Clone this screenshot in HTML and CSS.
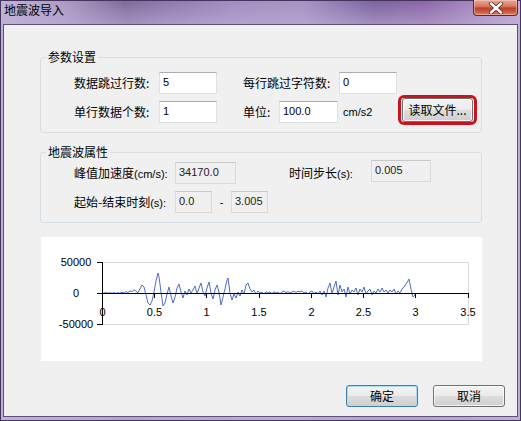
FILE: index.html
```html
<!DOCTYPE html>
<html lang="zh-CN">
<head>
<meta charset="utf-8">
<title>地震波导入</title>
<link rel="stylesheet" href="styles.css">
</head>
<body>
<div class="window">
  <div class="titlebar">
    <span class="title">地震波导入</span>
    <div class="close">
      <svg width="20" height="12" viewBox="0 0 20 12">
        <path d="M5 1.5 L15 10.5 M15 1.5 L5 10.5" stroke="#5a2a22" stroke-width="4" stroke-linecap="round"/>
        <path d="M5 1.5 L15 10.5 M15 1.5 L5 10.5" stroke="#ffffff" stroke-width="2.4" stroke-linecap="round"/>
      </svg>
    </div>
  </div>
  <div class="client">
    <fieldset class="group g1">
      <legend>参数设置</legend>
      <div class="rows">
        <div class="row">
          <span class="lbl w85">数据跳过行数:</span>
          <div class="edit w58">5</div>
          <span class="lbl w96 ml26">每行跳过字符数:</span>
          <div class="edit w58">0</div>
        </div>
        <div class="row r2">
          <span class="lbl w85">单行数据个数:</span>
          <div class="edit w58">1</div>
          <span class="lbl w36 ml26">单位:</span>
          <div class="edit w59">100.0</div>
          <span class="unit">cm/s2</span>
          <div class="highlight"><div class="btn read">读取文件...</div></div>
        </div>
      </div>
    </fieldset>
    <fieldset class="group g2">
      <legend>地震波属性</legend>
      <div class="rows">
        <div class="row">
          <span class="lbl w101">峰值加速度<span class="lat">(cm/s):</span></span>
          <div class="ro w61">34170.0</div>
          <span class="lbl w82 ml53">时间步长<span class="lat">(s):</span></span>
          <div class="ro w60 up">0.005</div>
        </div>
        <div class="row r2b">
          <span class="lbl w101">起始-结束时刻<span class="lat">(s):</span></span>
          <div class="ro w37">0.0</div>
          <span class="dash">-</span>
          <div class="ro w37">3.005</div>
        </div>
      </div>
    </fieldset>
    <div class="chart">
      <svg width="441" height="124" viewBox="0 0 441 124">
        <g stroke="#d9d9d9" stroke-width="1" fill="none">
          <path d="M61 25.5 H427.5 V87.5 H61"/>
        </g>
        <polyline fill="none" stroke="#4f6ec3" stroke-width="1" stroke-linejoin="round" points="61,56 63,56 65,55.5 67,56.3 69,55.8 71,56.2 73,55.6 75,56.4 77,55.7 79,56.3 81,55.2 83,56 85,54.6 87,55.5 89,53.8 91,54.6 93,52.7 95,54.2 97,55.8 99,52 101,48 103,50 105,58 107,66 109,68 111,64 113,55 115,44 117,36 118,40 120,55 122,69 124,66 126,57 128,50 130,59 132,66 134,60 136,51 138,47 140,55 142,61 144,54 146,58 148,52 150,56 152,53 154,49 156,57 158,51 160,46 162,55 164,59 166,51 168,45 170,56 172,62 174,53 176,48 178,55 180,68 182,60 184,52 186,43 187,41 189,56 191,63 193,57 195,61 197,55 199,59 201,53 203,57 205,48 207,46 209,52 211,55 213,53 215,57 217,54 219,56 221,55 223,57 225,54.5 227,56 229,55 231,56.5 233,54.8 235,56 237,55.2 239,56.8 241,55 243,54 245,55.6 247,54.5 249,56 251,55 253,54 255,55.5 257,54.2 259,55 261,53.8 263,56 265,55 267,57 269,55 271,54 273,56.5 275,55 277,57 279,54 281,58 283,54 285,60 287,51 289,46 291,57 293,50 295,44 297,58 299,48 301,55 303,52 305,60 307,50 309,57 311,53 313,55 315,51 317,58 319,52 321,55 323,50 325,57 327,54 329,52 331,58 333,54 335,56 337,52 339,55 341,51 343,55 345,53 347,56 349,53 351,55 353,52 355,57 357,54 359,56 361,52 363,50 365,47 367,44 368,42 370,52 372,60 374,58 375,56"/>
        <g stroke="#000" stroke-width="1" fill="none">
          <path d="M61.5 25 V88 M56 25.5 H61.5 M56 56.5 H61.5 M56 87.5 H61.5"/>
          <path d="M61 56.5 H427.5"/>
          <path d="M61.5 56 V61 M113.5 56 V61 M165.5 56 V61 M218.5 56 V61 M270.5 56 V61 M322.5 56 V61 M374.5 56 V61 M427.5 56 V61"/>
        </g>
        <g class="axis" text-anchor="middle">
          <text x="35" y="29">50000</text>
          <text x="35" y="60">0</text>
          <text x="35" y="91">-50000</text>
          <text x="61.5" y="79">0</text>
          <text x="113.5" y="79">0.5</text>
          <text x="165.5" y="79">1</text>
          <text x="218" y="79">1.5</text>
          <text x="270.5" y="79">2</text>
          <text x="322.5" y="79">2.5</text>
          <text x="374.5" y="79">3</text>
          <text x="427" y="79">3.5</text>
        </g>
      </svg>
    </div>
    <div class="actions">
      <div class="btn default">确定</div>
      <div class="btn">取消</div>
    </div>
  </div>
</div>
</body>
</html>
```
FILE: styles.css
```css
html, body {
  margin: 0;
  padding: 0;
  background: #ffffff;
}
.window {
  width: 521px;
  height: 421px;
  box-sizing: border-box;
  border: 1px solid #43365a;
  padding: 0 2px 3px 2px;
  display: flex;
  flex-direction: column;
  background:
    linear-gradient(to bottom, rgba(255,255,255,0) 0px, rgba(190,175,215,0.55) 22px, rgba(190,175,215,0.85) 40px),
    linear-gradient(to right, #c1b3d5 0%, #ad9bc6 12%, #7f6a99 24%, #8f79ad 32%, #a38ec0 45%, #a893c3 58%, #7a62a0 72%, #8d67a7 82%, #a68cc3 92%, #bfaed6 100%);
  font-family: "Noto Sans CJK SC", "Liberation Sans", sans-serif;
}
.titlebar {
  height: 23px;
  display: flex;
  align-items: flex-start;
}
.title {
  margin-top: 1px;
  margin-left: 1px;
  font-size: 12px;
  line-height: 16px;
  color: #000;
}
.close {
  margin-left: auto;
  margin-top: -1px;
  width: 45px;
  height: 16px;
  box-sizing: border-box;
  border: 1px solid #5c2a26;
  border-top: none;
  border-radius: 0 0 4px 4px;
  background: linear-gradient(to bottom, #e9a797 0%, #d77a66 40%, #c0412a 55%, #cf5a42 80%, #e0826b 100%);
  box-shadow: inset 0 0 0 1px rgba(255,220,210,0.45);
  display: flex;
  align-items: center;
  justify-content: center;
}
.close svg { display: block; }
.client {
  flex: 1;
  border: 1px solid #5f507a;
  background: #f0f0f0;
  padding: 25px 35px 0 36px;
}
.group {
  margin: 0;
  padding: 0 0 9px 0;
  border: 1px solid #d5dfe5;
  border-radius: 3px;
  min-width: 0;
}
.group legend {
  margin-left: 5px;
  padding: 0 2px;
  font-size: 12px;
  line-height: 14px;
  color: #000;
}
.g1 .rows { padding-top: 8px; }
.g2 { margin-top: 12px; }
.g2 .rows { padding-top: 3px; }
.rows { padding-left: 33px; }
.row {
  display: flex;
  align-items: center;
  height: 22px;
}
.r2 { margin-top: 7px; }
.r2b { margin-top: 7px; }
.lbl {
  font-size: 12px;
  line-height: 16px;
  color: #000;
  white-space: nowrap;
}
.lat {
  font-family: "Liberation Sans", sans-serif;
  font-size: 11px;
}
.w85 { width: 85px; }
.w96 { width: 96px; }
.w36 { width: 36px; }
.w101 { width: 101px; }
.w82 { width: 82px; }
.ml26 { margin-left: 26px; }
.ml53 { margin-left: 53px; }
.edit, .ro {
  box-sizing: border-box;
  height: 22px;
  padding: 0 3px;
  font-family: "Liberation Sans", sans-serif;
  font-size: 11px;
  line-height: 18px;
}
.edit {
  background: #ffffff;
  border: 1px solid #dde1e6;
  border-top-color: #abadb3;
  color: #000;
}
.ro {
  background: #f0f0f0;
  border: 1px solid #dadada;
  border-top-color: #c8c8c8;
  color: #222;
}
.w58 { width: 58px; }
.w59 { width: 59px; }
.w61 { width: 61px; }
.w60 { width: 60px; }
.w37 { width: 37px; }
.up { margin-bottom: 4px; }
.unit {
  margin-left: 5px;
  width: 55px;
  font-family: "Liberation Sans", sans-serif;
  font-size: 11px;
  color: #000;
}
.dash {
  width: 19px;
  text-align: center;
  font-family: "Liberation Sans", sans-serif;
  font-size: 11px;
}
.highlight {
  margin-top: -8px;
  margin-bottom: -4px;
  border: 3px solid #c8141e;
  border-radius: 6px;
  padding: 0 1px;
}
.btn {
  box-sizing: border-box;
  width: 72px;
  height: 22px;
  border: 1px solid #707070;
  border-radius: 3px;
  background: linear-gradient(to bottom, #f3f3f3 0%, #ebebeb 48%, #dddddd 52%, #cfcfcf 100%);
  box-shadow: inset 0 0 0 1px rgba(255,255,255,0.75);
  font-size: 12px;
  line-height: 19px;
  text-align: center;
  color: #000;
}
.btn.read {
  width: 71px;
  height: 24px;
  line-height: 21px;
}
.btn.default {
  border-color: #3c7fb1;
  box-shadow: inset 0 0 0 1px #a9dcf5;
}
.chart {
  margin-top: 14px;
  margin-left: 1px;
  width: 441px;
  height: 124px;
  background: #ffffff;
}
.chart svg { display: block; }
.axis {
  font-family: "Liberation Sans", sans-serif;
  font-size: 11px;
  fill: #000;
}
.actions {
  margin-top: 24px;
  margin-right: -23px;
  display: flex;
  justify-content: flex-end;
  gap: 15px;
}
```
